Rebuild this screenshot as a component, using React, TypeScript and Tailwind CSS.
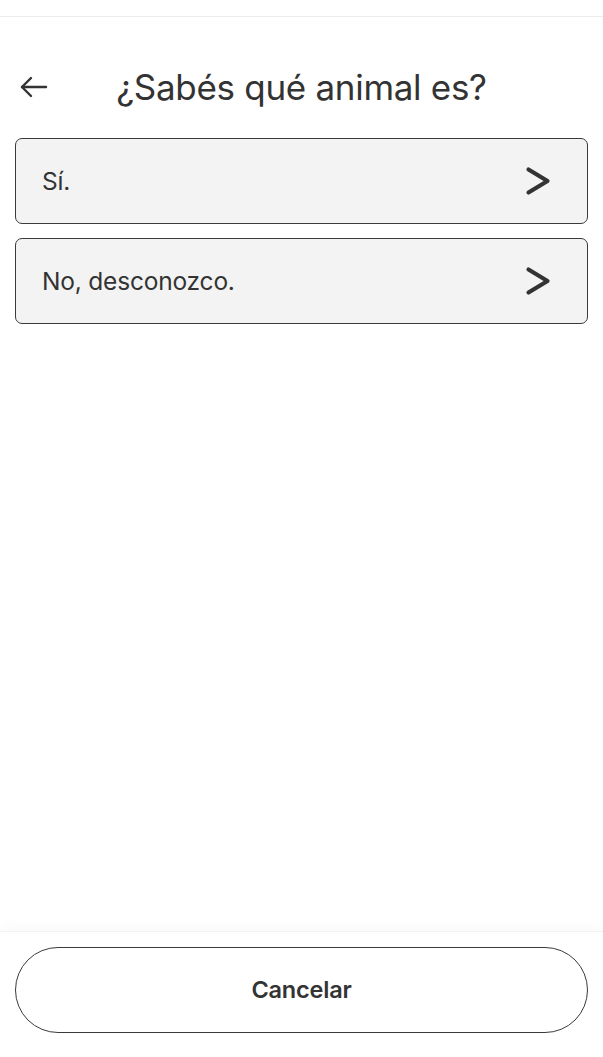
import React from "react";

function BackArrow() {
  return (
    <svg width="30" height="24" viewBox="0 0 30 24" fill="none" stroke="#333" strokeWidth="2.4" strokeLinecap="round" strokeLinejoin="round">
      <path d="M27 12H3" />
      <path d="M12 3L3 12L12 21" />
    </svg>
  );
}

function Chevron() {
  return (
    <svg width="26" height="30" viewBox="0 0 26 30" fill="none" stroke="#333" strokeWidth="4.2" strokeLinecap="round" strokeLinejoin="round">
      <path d="M3.5 3.5L22.5 15L3.5 26.5" />
    </svg>
  );
}

function Option({ label }: { label: string }) {
  return (
    <button className="flex h-[86px] w-full items-center justify-between rounded-[7px] border border-[#3a3a3a] bg-[#f3f3f3] pl-[26px] pr-[36px] text-left">
      <span className="text-[24.5px] tracking-[-0.2px] text-[#333]">{label}</span>
      <Chevron />
    </button>
  );
}

export default function App() {
  return (
    <div
      className="flex h-[1057px] w-full flex-col bg-white"
      style={{ fontFamily: "Inter, 'Noto Sans', sans-serif" }}
    >
      <div className="h-[17px] border-b border-[#ececec]" />

      <div className="relative mt-[50px] flex h-[40px] items-center justify-center">
        <div className="absolute left-[19px] top-[8px]">
          <BackArrow />
        </div>
        <h1 className="text-[35px] font-normal tracking-[-0.3px] text-[#333]">¿Sabés qué animal es?</h1>
      </div>

      <div className="mt-[31px] flex flex-col gap-[14px] px-[15px]">
        <Option label="Sí." />
        <Option label="No, desconozco." />
      </div>

      <div className="flex-1" />

      <div className="border-t border-[#f2f2f2] px-[15px] pb-[24px] pt-[15px] shadow-[0_-6px_10px_rgba(0,0,0,0.02)]">
        <button className="flex h-[86px] w-full items-center justify-center rounded-full border border-[#3a3a3a] bg-white">
          <span className="text-[23.5px] font-semibold tracking-[-0.2px] text-[#333]">Cancelar</span>
        </button>
      </div>
    </div>
  );
}
